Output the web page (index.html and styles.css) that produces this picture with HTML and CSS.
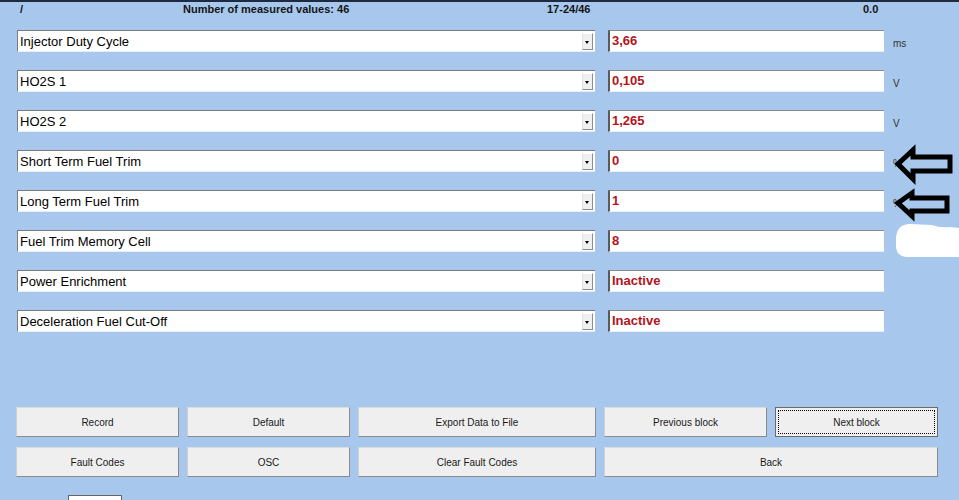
FILE: index.html
```html
<!DOCTYPE html>
<html>
<head>
<meta charset="utf-8">
<title>Measured values</title>
<link rel="stylesheet" href="styles.css">
</head>
<body>
<div class="screen">
  <div class="topbar">
    <span>/</span>
    <span>Number of measured values: 46</span>
    <span>17-24/46</span>
    <span>0.0</span>
  </div>

  <div class="rows">
    <div class="row">
      <div class="select"><span class="label">Injector Duty Cycle</span><span class="dd"></span></div>
      <div class="value">3,66</div>
      <span class="unit">ms</span>
    </div>
    <div class="row">
      <div class="select"><span class="label">HO2S 1</span><span class="dd"></span></div>
      <div class="value">0,105</div>
      <span class="unit">V</span>
    </div>
    <div class="row">
      <div class="select"><span class="label">HO2S 2</span><span class="dd"></span></div>
      <div class="value">1,265</div>
      <span class="unit">V</span>
    </div>
    <div class="row">
      <div class="select"><span class="label">Short Term Fuel Trim</span><span class="dd"></span></div>
      <div class="value">0</div>
      <span class="unit">%</span>
    </div>
    <div class="row">
      <div class="select"><span class="label">Long Term Fuel Trim</span><span class="dd"></span></div>
      <div class="value">1</div>
      <span class="unit">%</span>
    </div>
    <div class="row">
      <div class="select"><span class="label">Fuel Trim Memory Cell</span><span class="dd"></span></div>
      <div class="value">8</div>
      <span class="unit"></span>
    </div>
    <div class="row">
      <div class="select"><span class="label">Power Enrichment</span><span class="dd"></span></div>
      <div class="value">Inactive</div>
    </div>
    <div class="row">
      <div class="select"><span class="label">Deceleration Fuel Cut-Off</span><span class="dd"></span></div>
      <div class="value">Inactive</div>
    </div>
  </div>

  <div class="buttons">
    <div class="btn">Record</div>
    <div class="btn">Default</div>
    <div class="btn">Export Data to File</div>
    <div class="btn">Previous block</div>
    <div class="btn focus">Next block</div>
    <div class="btn">Fault Codes</div>
    <div class="btn">OSC</div>
    <div class="btn">Clear Fault Codes</div>
    <div class="btn back">Back</div>
  </div>

  <div class="stub"></div>

  <svg class="annot" width="959" height="500" viewBox="0 0 959 500">
    <polygon points="898,164 913,150 913,157 950,157 950,171 913,171 913,179" fill="none" stroke="#000" stroke-width="5" stroke-linejoin="miter"/>
    <polygon points="898,203 912,193 912,198 947,198 947,211 912,211 912,216" fill="none" stroke="#000" stroke-width="5" stroke-linejoin="miter"/>
    <path d="M896 238 Q897 224 910 224 L932 225 Q940 228 950 227 L959 228 L959 257 L906 257 Q896 256 896 246 Z" fill="#fff"/>
  </svg>
</div>
</body>
</html>
```

FILE: styles.css
```css
html, body {
  margin: 0;
  height: 500px;
  overflow: hidden;
}

body {
  background: #a7c8ec;
  font-family: "Liberation Sans", Arial, sans-serif;
}

.screen {
  position: relative;
  height: 500px;
}

.topbar {
  border-top: 2px solid #1d2a40;
  height: 14px;
  display: grid;
  grid-template-columns: 163px 364px 316px 1fr;
  padding-left: 20px;
  font-size: 11px;
  font-weight: bold;
  line-height: 14px;
  color: #141414;
}

.rows {
  margin-top: 14px;
  display: flex;
  flex-direction: column;
  gap: 18px;
  padding-left: 17px;
}

.row {
  display: flex;
  align-items: flex-start;
  height: 22px;
}

.select {
  width: 578px;
  height: 22px;
  box-sizing: border-box;
  background: #fff;
  border-top: 1px solid #7b7b7b;
  border-left: 1px solid #7b7b7b;
  border-bottom: 1px solid #e6eef8;
  display: flex;
  align-items: center;
  padding-left: 2px;
  font-size: 13px;
  color: #000;
}

.label {
  flex: 1;
}

.dd {
  width: 11px;
  height: 17px;
  margin-right: 2px;
  background: #f0f0f0;
  border: 1px solid;
  border-color: #fff #8c8c8c #8c8c8c #e0e0e0;
  box-sizing: border-box;
  position: relative;
}

.dd::after {
  content: "";
  position: absolute;
  left: 2px;
  top: 7px;
  border-top: 3px solid #000;
  border-left: 2.5px solid transparent;
  border-right: 2.5px solid transparent;
}

.value {
  margin-left: 13px;
  width: 276px;
  height: 22px;
  box-sizing: border-box;
  background: #fff;
  border-top: 1px solid #8b8b8b;
  border-left: 2px solid #5a5a5a;
  border-bottom: 1px solid #e6eef8;
  padding-left: 2px;
  color: #b3141c;
  font-weight: bold;
  font-size: 13px;
  line-height: 20px;
}

.unit {
  margin-left: 9px;
  margin-top: 8px;
  font-size: 10px;
  color: #333;
}

.buttons {
  margin-top: 75px;
  padding-left: 16px;
  display: grid;
  grid-template-columns: 163px 163px 238px 163px 163px;
  grid-auto-rows: 30px;
  column-gap: 8px;
  row-gap: 10px;
}

.btn {
  background: #efefef;
  border: 1px solid;
  border-color: #dcdcdc #8a8a8a #8a8a8a #cfcfcf;
  box-sizing: border-box;
  display: flex;
  align-items: center;
  justify-content: center;
  font-size: 10px;
  color: #1a1a1a;
  position: relative;
}

.btn.back {
  grid-column: span 2;
}

.btn.focus {
  border-color: #6a6a6a;
}

.btn.focus::after {
  content: "";
  position: absolute;
  inset: 2px;
  border: 1px dotted #000;
}

.stub {
  margin: 18px 0 0 68px;
  width: 54px;
  height: 20px;
  background: #fff;
  border: 1px solid #666;
  box-sizing: border-box;
}

.annot {
  position: absolute;
  left: 0;
  top: 0;
  pointer-events: none;
}
```
